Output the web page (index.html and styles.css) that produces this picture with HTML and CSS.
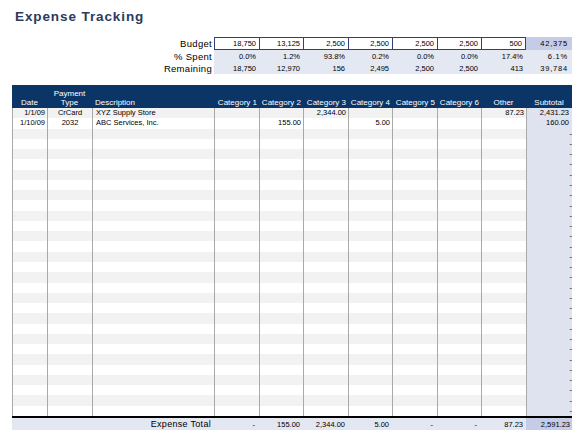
FILE: index.html
```html
<!DOCTYPE html>
<html>
<head>
<meta charset="utf-8">
<link rel="stylesheet" href="styles.css">
</head>
<body>
<div class="sheet">
  <div class="title">Expense Tracking</div>

  <div class="budget">
    <div class="lbl">Budget</div>
    <div class="bv first">18,750</div>
    <div class="bv">13,125</div>
    <div class="bv">2,500</div>
    <div class="bv">2,500</div>
    <div class="bv">2,500</div>
    <div class="bv">2,500</div>
    <div class="bv last">500</div>
    <div class="btot">42,375</div>

    <div class="lbl">% Spent</div>
    <div class="sv">0.0%</div>
    <div class="sv">1.2%</div>
    <div class="sv">93.8%</div>
    <div class="sv">0.2%</div>
    <div class="sv">0.0%</div>
    <div class="sv">0.0%</div>
    <div class="sv">17.4%</div>
    <div class="sv tot">6.1%</div>

    <div class="lbl">Remaining</div>
    <div class="sv">18,750</div>
    <div class="sv">12,970</div>
    <div class="sv">156</div>
    <div class="sv">2,495</div>
    <div class="sv">2,500</div>
    <div class="sv">2,500</div>
    <div class="sv">413</div>
    <div class="sv tot">39,784</div>
  </div>

  <div class="grid">
    <div class="hrow">
      <div class="h c">Date</div>
      <div class="h c">Payment<br>Type</div>
      <div class="h l">Description</div>
      <div class="h r">Category 1</div>
      <div class="h r">Category 2</div>
      <div class="h r">Category 3</div>
      <div class="h r">Category 4</div>
      <div class="h r">Category 5</div>
      <div class="h r">Category 6</div>
      <div class="h c">Other</div>
      <div class="h c">Subtotal</div>
    </div>

    <div class="rows">
      <div class="row odd"><div class="d r">1/1/09</div><div class="d c">CrCard</div><div class="d l">XYZ Supply Store</div><div class="d"></div><div class="d"></div><div class="d r">2,344.00</div><div class="d"></div><div class="d"></div><div class="d"></div><div class="d r">87.23</div><div class="d st">2,431.23</div></div>
      <div class="row"><div class="d r">1/10/09</div><div class="d c">2032</div><div class="d l">ABC Services, Inc.</div><div class="d"></div><div class="d r">155.00</div><div class="d"></div><div class="d r">5.00</div><div class="d"></div><div class="d"></div><div class="d"></div><div class="d st">160.00</div></div>
      <div class="row odd"><div class="d"></div><div class="d"></div><div class="d"></div><div class="d"></div><div class="d"></div><div class="d"></div><div class="d"></div><div class="d"></div><div class="d"></div><div class="d"></div><div class="d st dash">-</div></div>
      <div class="row"><div class="d"></div><div class="d"></div><div class="d"></div><div class="d"></div><div class="d"></div><div class="d"></div><div class="d"></div><div class="d"></div><div class="d"></div><div class="d"></div><div class="d st dash">-</div></div>
      <div class="row odd"><div class="d"></div><div class="d"></div><div class="d"></div><div class="d"></div><div class="d"></div><div class="d"></div><div class="d"></div><div class="d"></div><div class="d"></div><div class="d"></div><div class="d st dash">-</div></div>
      <div class="row"><div class="d"></div><div class="d"></div><div class="d"></div><div class="d"></div><div class="d"></div><div class="d"></div><div class="d"></div><div class="d"></div><div class="d"></div><div class="d"></div><div class="d st dash">-</div></div>
      <div class="row odd"><div class="d"></div><div class="d"></div><div class="d"></div><div class="d"></div><div class="d"></div><div class="d"></div><div class="d"></div><div class="d"></div><div class="d"></div><div class="d"></div><div class="d st dash">-</div></div>
      <div class="row"><div class="d"></div><div class="d"></div><div class="d"></div><div class="d"></div><div class="d"></div><div class="d"></div><div class="d"></div><div class="d"></div><div class="d"></div><div class="d"></div><div class="d st dash">-</div></div>
      <div class="row odd"><div class="d"></div><div class="d"></div><div class="d"></div><div class="d"></div><div class="d"></div><div class="d"></div><div class="d"></div><div class="d"></div><div class="d"></div><div class="d"></div><div class="d st dash">-</div></div>
      <div class="row"><div class="d"></div><div class="d"></div><div class="d"></div><div class="d"></div><div class="d"></div><div class="d"></div><div class="d"></div><div class="d"></div><div class="d"></div><div class="d"></div><div class="d st dash">-</div></div>
      <div class="row odd"><div class="d"></div><div class="d"></div><div class="d"></div><div class="d"></div><div class="d"></div><div class="d"></div><div class="d"></div><div class="d"></div><div class="d"></div><div class="d"></div><div class="d st dash">-</div></div>
      <div class="row"><div class="d"></div><div class="d"></div><div class="d"></div><div class="d"></div><div class="d"></div><div class="d"></div><div class="d"></div><div class="d"></div><div class="d"></div><div class="d"></div><div class="d st dash">-</div></div>
      <div class="row odd"><div class="d"></div><div class="d"></div><div class="d"></div><div class="d"></div><div class="d"></div><div class="d"></div><div class="d"></div><div class="d"></div><div class="d"></div><div class="d"></div><div class="d st dash">-</div></div>
      <div class="row"><div class="d"></div><div class="d"></div><div class="d"></div><div class="d"></div><div class="d"></div><div class="d"></div><div class="d"></div><div class="d"></div><div class="d"></div><div class="d"></div><div class="d st dash">-</div></div>
      <div class="row odd"><div class="d"></div><div class="d"></div><div class="d"></div><div class="d"></div><div class="d"></div><div class="d"></div><div class="d"></div><div class="d"></div><div class="d"></div><div class="d"></div><div class="d st dash">-</div></div>
      <div class="row"><div class="d"></div><div class="d"></div><div class="d"></div><div class="d"></div><div class="d"></div><div class="d"></div><div class="d"></div><div class="d"></div><div class="d"></div><div class="d"></div><div class="d st dash">-</div></div>
      <div class="row odd"><div class="d"></div><div class="d"></div><div class="d"></div><div class="d"></div><div class="d"></div><div class="d"></div><div class="d"></div><div class="d"></div><div class="d"></div><div class="d"></div><div class="d st dash">-</div></div>
      <div class="row"><div class="d"></div><div class="d"></div><div class="d"></div><div class="d"></div><div class="d"></div><div class="d"></div><div class="d"></div><div class="d"></div><div class="d"></div><div class="d"></div><div class="d st dash">-</div></div>
      <div class="row odd"><div class="d"></div><div class="d"></div><div class="d"></div><div class="d"></div><div class="d"></div><div class="d"></div><div class="d"></div><div class="d"></div><div class="d"></div><div class="d"></div><div class="d st dash">-</div></div>
      <div class="row"><div class="d"></div><div class="d"></div><div class="d"></div><div class="d"></div><div class="d"></div><div class="d"></div><div class="d"></div><div class="d"></div><div class="d"></div><div class="d"></div><div class="d st dash">-</div></div>
      <div class="row odd"><div class="d"></div><div class="d"></div><div class="d"></div><div class="d"></div><div class="d"></div><div class="d"></div><div class="d"></div><div class="d"></div><div class="d"></div><div class="d"></div><div class="d st dash">-</div></div>
      <div class="row"><div class="d"></div><div class="d"></div><div class="d"></div><div class="d"></div><div class="d"></div><div class="d"></div><div class="d"></div><div class="d"></div><div class="d"></div><div class="d"></div><div class="d st dash">-</div></div>
      <div class="row odd"><div class="d"></div><div class="d"></div><div class="d"></div><div class="d"></div><div class="d"></div><div class="d"></div><div class="d"></div><div class="d"></div><div class="d"></div><div class="d"></div><div class="d st dash">-</div></div>
      <div class="row"><div class="d"></div><div class="d"></div><div class="d"></div><div class="d"></div><div class="d"></div><div class="d"></div><div class="d"></div><div class="d"></div><div class="d"></div><div class="d"></div><div class="d st dash">-</div></div>
      <div class="row odd"><div class="d"></div><div class="d"></div><div class="d"></div><div class="d"></div><div class="d"></div><div class="d"></div><div class="d"></div><div class="d"></div><div class="d"></div><div class="d"></div><div class="d st dash">-</div></div>
      <div class="row"><div class="d"></div><div class="d"></div><div class="d"></div><div class="d"></div><div class="d"></div><div class="d"></div><div class="d"></div><div class="d"></div><div class="d"></div><div class="d"></div><div class="d st dash">-</div></div>
      <div class="row odd"><div class="d"></div><div class="d"></div><div class="d"></div><div class="d"></div><div class="d"></div><div class="d"></div><div class="d"></div><div class="d"></div><div class="d"></div><div class="d"></div><div class="d st dash">-</div></div>
      <div class="row"><div class="d"></div><div class="d"></div><div class="d"></div><div class="d"></div><div class="d"></div><div class="d"></div><div class="d"></div><div class="d"></div><div class="d"></div><div class="d"></div><div class="d st dash">-</div></div>
      <div class="row odd"><div class="d"></div><div class="d"></div><div class="d"></div><div class="d"></div><div class="d"></div><div class="d"></div><div class="d"></div><div class="d"></div><div class="d"></div><div class="d"></div><div class="d st dash">-</div></div>
      <div class="row"><div class="d"></div><div class="d"></div><div class="d"></div><div class="d"></div><div class="d"></div><div class="d"></div><div class="d"></div><div class="d"></div><div class="d"></div><div class="d"></div><div class="d st dash">-</div></div>
    </div>

    <div class="frow">
      <div class="ftlbl">Expense Total</div>
      <div class="f dashf">-</div>
      <div class="f">155.00</div>
      <div class="f">2,344.00</div>
      <div class="f">5.00</div>
      <div class="f dashf">-</div>
      <div class="f dashf">-</div>
      <div class="f">87.23</div>
      <div class="f ftot">2,591.23</div>
    </div>
  </div>
</div>
</body>
</html>
```

FILE: styles.css
```css
* { box-sizing: border-box; }

body {
  margin: 0;
  background: #ffffff;
  font-family: "Liberation Sans", Arial, sans-serif;
  color: #000000;
}

.sheet {
  padding: 9px 0 0 12px;
  width: 587px;
}

.title {
  margin-left: 3px;
  font-size: 13.5px;
  line-height: 16px;
  font-weight: bold;
  letter-spacing: 0.9px;
  color: #2b3a5e;
}

/* ---------- budget block ---------- */
.budget {
  display: grid;
  grid-template-columns: 202px 45px 44px 45px 44px 45px 44px 45px 46px;
  grid-template-rows: 13px 12px 12px;
  margin-top: 12px;
  width: 560px;
}

.lbl {
  font-size: 9.5px;
  letter-spacing: 0.3px;
  text-align: right;
  padding-right: 2px;
  display: flex;
  align-items: center;
  justify-content: flex-end;
}

.bv, .sv, .btot {
  font-size: 7.5px;
  display: flex;
  align-items: center;
  justify-content: flex-end;
  padding-right: 3px;
}

.bv {
  background: #ffffff;
  border-top: 1px solid #2f3f7a;
  border-bottom: 1px solid #2f3f7a;
  border-left: 1px solid #2f3f7a;
}

.bv.last {
  border-right: 1px solid #2f3f7a;
}

.btot {
  background: #c5cce6;
  letter-spacing: 0.8px;
  padding-right: 4px;
}

.sv {
  background: #e4e8f3;
}

.sv.tot {
  letter-spacing: 0.8px;
  padding-right: 4px;
}

/* ---------- main grid ---------- */
.grid {
  margin-top: 11px;
  width: 560px;
}

.hrow, .row, .frow {
  display: grid;
  grid-template-columns: 35px 45px 122px 45px 44px 45px 44px 45px 44px 45px 46px;
}

.hrow {
  height: 23px;
  background: #0b3566;
  color: #ffffff;
}

.h {
  font-size: 8px;
  line-height: 9px;
  display: flex;
  align-items: flex-end;
  padding-bottom: 1px;
}

.h.c { justify-content: center; text-align: center; }
.h.l { justify-content: flex-start; padding-left: 3px; }
.h.r { justify-content: flex-end; padding-right: 2px; }

.rows {
  display: grid;
  grid-template-rows: repeat(30, 1fr);
  height: 308px;
}

.row {
  background: #ffffff;
}

.row.odd {
  background: #f2f2f2;
}

.d {
  border-left: 1px solid #a9a9a9;
  font-size: 7.5px;
  line-height: 10px;
  display: flex;
  align-items: center;
  white-space: nowrap;
  overflow: hidden;
}

.d.r { justify-content: flex-end; padding-right: 2px; }
.d.c { justify-content: center; }
.d.l { justify-content: flex-start; padding-left: 3px; }

.d.st {
  background: #dfe3ef;
  justify-content: flex-end;
  padding-right: 3px;
}

.d.dash {
  padding-right: 0;
}

.frow {
  border-top: 2px solid #000000;
  background: #e3e7f2;
  height: 14px;
}

.ftlbl {
  grid-column: 1 / 4;
  font-size: 9px;
  letter-spacing: 0.3px;
  display: flex;
  align-items: center;
  justify-content: flex-end;
  padding-right: 3px;
}

.f {
  font-size: 7.5px;
  display: flex;
  align-items: center;
  justify-content: flex-end;
  padding-right: 3px;
}

.f.dashf {
  padding-right: 4px;
}

.f.ftot {
  background: #c5cce6;
  padding-right: 2px;
}
```
